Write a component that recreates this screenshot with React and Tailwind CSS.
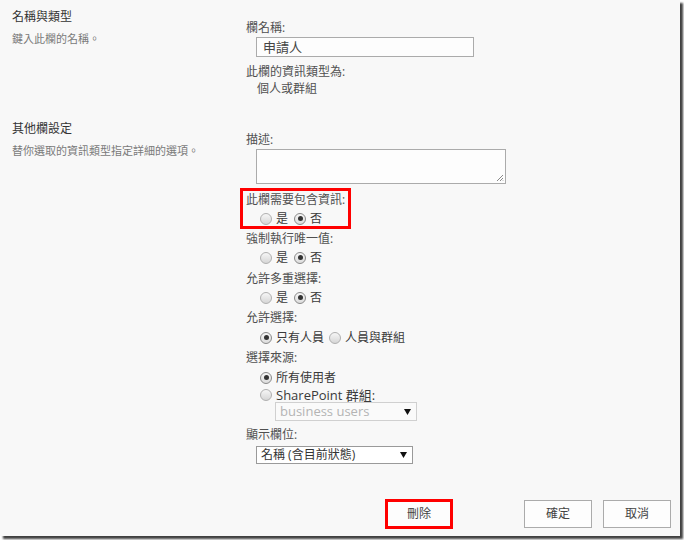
import React from "react";

function Radio({ checked }) {
  return (
    <span className={"flex h-[12px] w-[12px] shrink-0 items-center justify-center rounded-full border " + (checked ? "border-[#8a8a8a] bg-[linear-gradient(#f6f6f6,#dcdcdc)]" : "border-[#b0b0b0] bg-[linear-gradient(#f6f6f6,#d6d6d6)]")}>
      {checked && <span className="h-[5px] w-[5px] rounded-full bg-[#333]" />}
    </span>
  );
}

function RadioItem({ checked, label }) {
  return (
    <span className="flex items-center gap-[4px]">
      <Radio checked={checked} />
      <span className="text-[12px] leading-none text-[#3a3a3a]">{label}</span>
    </span>
  );
}

function Label({ children, mt }) {
  return (
    <div className={"flex h-[16px] items-center pl-[6px] text-[12px] leading-none text-[#505050] " + mt}>{children}</div>
  );
}

function YesNo({ mt, h = "h-[16px]" }) {
  return (
    <div className={"flex items-center gap-[6px] pl-[20px] pt-[1px] " + h + " " + mt}>
      <RadioItem checked={false} label="是" />
      <RadioItem checked={true} label="否" />
    </div>
  );
}

function Arrow() {
  return (
    <svg width="7" height="6" viewBox="0 0 7 6" className="shrink-0">
      <path d="M0 0 H7 L3.5 6 Z" fill="#111" />
    </svg>
  );
}

export default function App() {
  return (
    <div className="h-[540px] w-[684px] bg-white font-['Open_Sans','Noto_Sans_CJK_TC',sans-serif]">
      <div className="flex h-[536px] w-[680px] flex-col bg-[#f8f8f8] shadow-[3px_3px_2px_rgba(0,0,0,0.75)]">
        {/* Section 1 */}
        <div className="flex h-[112px]">
          <div className="flex w-[240px] flex-col pl-[12px] pt-[9px]">
            <div className="flex h-[16px] items-center text-[12px] leading-none text-[#333]">名稱與類型</div>
            <div className="mt-[5px] flex h-[16px] items-center text-[11px] leading-none text-[#7a7a7a]">鍵入此欄的名稱。</div>
          </div>
          <div className="flex flex-col pt-[20px]">
            <Label>欄名稱:</Label>
            <div className="ml-[16px] mt-[1px] flex h-[20px] w-[218px] items-center border border-[#ababab] bg-[#fdfdfd] pl-[6px] text-[13px] leading-none text-[#444]">申請人</div>
            <Label mt="mt-[7px]">此欄的資訊類型為:</Label>
            <div className="mt-[1px] flex h-[16px] items-center pl-[17px] text-[12px] leading-none text-[#505050]">個人或群組</div>
          </div>
        </div>
        {/* Section 2 */}
        <div className="flex">
          <div className="flex w-[240px] flex-col pl-[12px] pt-[9px]">
            <div className="flex h-[16px] items-center text-[12px] leading-none text-[#333]">其他欄設定</div>
            <div className="mt-[5px] flex h-[16px] items-center text-[11px] leading-none text-[#7a7a7a]">替你選取的資訊類型指定詳細的選項。</div>
          </div>
          <div className="flex flex-col pt-[20px]">
            <Label>描述:</Label>
            <div className="relative ml-[16px] mt-[1px] h-[35px] w-[250px] border border-[#ababab] bg-[#fdfdfd]">
              <svg width="8" height="8" viewBox="0 0 8 8" className="absolute bottom-[1px] right-[1px]">
                <path d="M7 1 L1 7 M7 4 L4 7 M7 6.5 L6.5 7" stroke="#888" strokeWidth="1" />
              </svg>
            </div>
            <div className="mt-[4px] flex h-[41px] w-[111px] flex-col border-[3px] border-[#ff0000]">
              <div className="flex h-[17px] items-center pl-[3px] text-[12px] leading-none text-[#505050]">此欄需要包含資訊:</div>
              <div className="flex h-[18px] items-center gap-[6px] pl-[17px] pt-[3px]">
                <RadioItem checked={false} label="是" />
                <RadioItem checked={true} label="否" />
              </div>
            </div>
            <Label mt="mt-[2px]">強制執行唯一值:</Label>
            <YesNo mt="mt-[2px]" />
            <Label mt="mt-[6px]">允許多重選擇:</Label>
            <YesNo mt="mt-[2px]" />
            <Label mt="mt-[5px]">允許選擇:</Label>
            <div className="mt-[3px] flex h-[16px] items-center gap-[5px] pl-[20px] pt-[1px]">
              <RadioItem checked={true} label="只有人員" />
              <RadioItem checked={false} label="人員與群組" />
            </div>
            <Label mt="mt-[5px]">選擇來源:</Label>
            <div className="mt-[3px] flex h-[16px] items-center pl-[20px] pt-[1px]">
              <RadioItem checked={true} label="所有使用者" />
            </div>
            <div className="mt-[3px] flex h-[14px] items-center pl-[20px]">
              <span className="flex items-center gap-[4px]">
                <Radio checked={false} />
                <span className="text-[13px] leading-none text-[#3a3a3a]">SharePoint 群組:</span>
              </span>
            </div>
            <div className="ml-[35px] flex h-[19px] w-[142px] items-center justify-between border border-[#d0d0d0] bg-[#fafafa] pl-[4px] pr-[5px]">
              <span className="text-[13px] leading-none text-[#b4b4b4]">business users</span>
              <Arrow />
            </div>
            <Label mt="mt-[6px]">顯示欄位:</Label>
            <div className="ml-[16px] mt-[3px] flex h-[18px] w-[157px] items-center justify-between border border-[#9a9a9a] bg-white pl-[4px] pr-[5px]">
              <span className="text-[12px] leading-none text-[#333]">名稱 (含目前狀態)</span>
              <Arrow />
            </div>
          </div>
        </div>
        {/* Footer */}
        <div className="mt-[35px] flex items-start">
          <button className="ml-[385px] flex h-[30px] w-[68px] items-center justify-center border-[3px] border-[#ff0000] bg-[#fdfdfd] text-[12px] text-[#444]">刪除</button>
          <button className="ml-[71px] mt-[1px] flex h-[28px] w-[68px] items-center justify-center border border-[#ababab] bg-[#fdfdfd] text-[12px] text-[#444]">確定</button>
          <button className="ml-[11px] mt-[1px] flex h-[28px] w-[68px] items-center justify-center border border-[#ababab] bg-[#fdfdfd] text-[12px] text-[#444]">取消</button>
        </div>
      </div>
    </div>
  );
}
